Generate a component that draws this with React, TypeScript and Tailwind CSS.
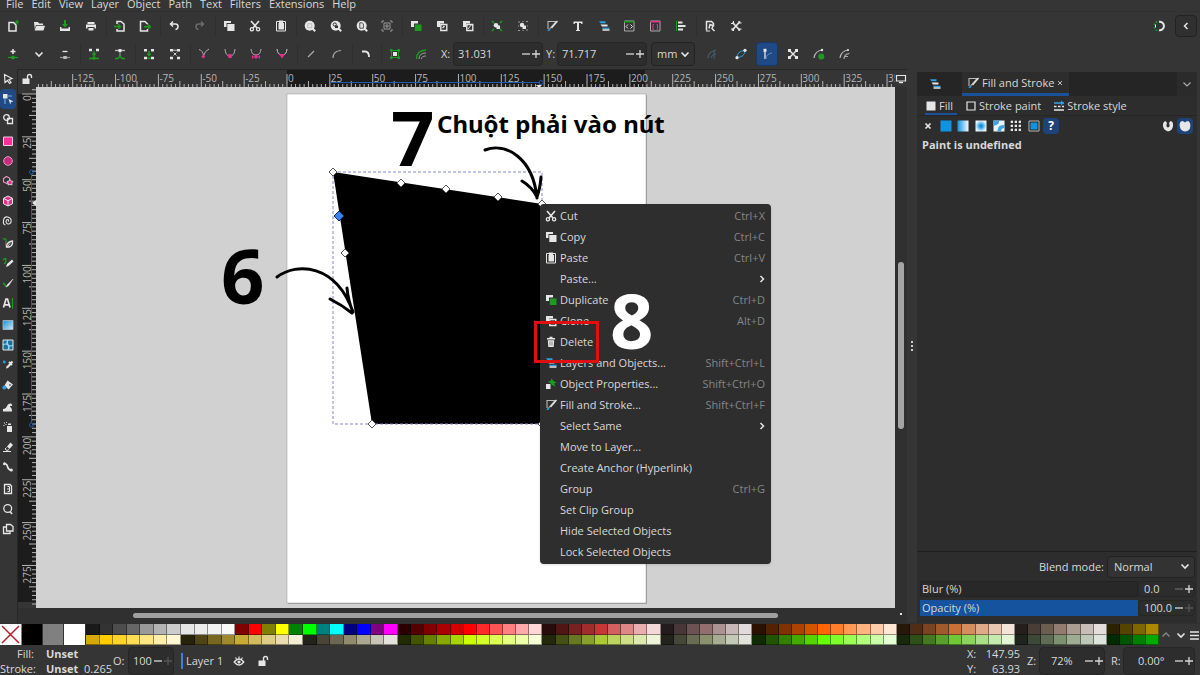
import { useState } from 'react';
import type { ReactNode } from 'react';

const W = '#e6e6e6';
const G = '#1c9c1f';
const P = '#e0318c';
const B = '#2f9fe0';

// every glyph is drawn on a 12 x 12 grid
const icons: Record<string, ReactNode> = {
  new: <><path d="M2 2.500h4.500l2.500 2.500V11H2z" fill="none" stroke={W} strokeWidth="1.500" /><path d="M10 0v4.500M7.800 2.200h4.200" stroke={G} strokeWidth="1.300" /></>,
  open: <path d="M1 2h4l1 1.500h4V5H3L1.800 9zM3.500 5.800H12L10.500 10.500H1.500z" fill={W} />,
  save: <><path d="M1 7v4h10V7H9.500v1.500h-7V7z" fill={W} /><path d="M5 0h2v4h2L6 7.500 3 4h2z" fill={G} /></>,
  print: <><path d="M2.500 2h7v2h-7zM1 4.500h10v4H9.500V7h-7v1.500H1z" fill={W} /><path d="M3.500 8h5v2.500h-5z" fill={W} /></>,
  import: <><path d="M3 4V1.500h4L10 4v7H3V9" fill="none" stroke={W} strokeWidth="1.500" /><path d="M0 6.500h6M4 4l2.500 2.500L4 9" fill="none" stroke={G} strokeWidth="1.500" /></>,
  export: <><path d="M8.500 4.500V4L6 1.500H1.500V11h7V9" fill="none" stroke={W} strokeWidth="1.500" /><path d="M5 6.800h6M9 4.500l2.500 2.300L9 9" fill="none" stroke={G} strokeWidth="1.500" /></>,
  undo: <path d="M5 1.500L2.500 4 5 6.500M2.500 4H7.500q2.500 0 2.500 2.500T7.500 9.500" fill="none" stroke={W} strokeWidth="1.500" />,
  redo: <path d="M7 1.500L9.500 4 7 6.500M9.500 4H4.500Q2 4 2 6.500T4.500 9.500" fill="none" stroke="#6b6b6b" strokeWidth="1.500" />,
  copy: <><path d="M1 1h7v2H3.500v4H1z" fill={W} /><path d="M4.300 4H11.500v7H4.300z" fill={W} /></>,
  cut: <><path d="M2 1l6 7M10 1L4 8" stroke={W} strokeWidth="1.600" /><circle cx="2.900" cy="9.300" r="1.600" fill="none" stroke={W} strokeWidth="1.300" /><circle cx="9.100" cy="9.300" r="1.600" fill="none" stroke={W} strokeWidth="1.300" /></>,
  paste: <><path d="M1.500 1.500h9v9.500h-9z" fill="none" stroke={W} /><path d="M4 .5h4V3h1v6.500H3.500V3H4z" fill={W} /></>,
  zoomSel: <><circle cx="5.700" cy="5.700" r="5" fill={W} /><path d="M8.500 8.500l2.700 2.700" stroke={W} strokeWidth="2" /><path d="M3.700 3.700h4v4h-4z" fill="none" stroke="#aaa" strokeWidth=".6" /></>,
  zoomDraw: <><circle cx="5.700" cy="5.700" r="5" fill={W} /><path d="M8.500 8.500l2.700 2.700" stroke={W} strokeWidth="2" /><circle cx="4.800" cy="4.500" r="1.600" fill="none" stroke="#333" /><path d="M5 5.500h3v2.500H5z" fill="#333" /></>,
  zoomPage: <><circle cx="5.700" cy="5.700" r="5" fill={W} /><path d="M8.500 8.500l2.700 2.700" stroke={W} strokeWidth="2" /><path d="M3.800 2.800h2.400l1.200 1.200v4.200H3.800z" fill="none" stroke="#444" strokeWidth=".9" /></>,
  zoomCenter: <><path d="M1 3V1h2M9 1h2v2M11 9v2H9M3 11H1V9" fill="none" stroke="#999" /><path d="M3 3h6v6H3zM5 5h2v2H5z" fill="none" stroke="#999" /></>,
  duplicate: <><path d="M1 1h7v2.500H4V7H1z" fill={W} /><path d="M4.800 4.500H11.500v6.500H4.800z" fill={G} /></>,
  clone: <><path d="M1 1h7v2.500H4V7H1z" fill={W} /><path d="M4.800 4.500h6v6h-6z" fill="none" stroke={W} strokeWidth="1.400" /><path d="M6.500 8l2-2" stroke={W} strokeWidth="1.400" /></>,
  unlink: <><path d="M1 1h7v2.500H4V7H1z" fill={W} /><path d="M4.800 4.500h6v6h-6z" fill="none" stroke={W} strokeWidth="1.400" /><path d="M6 9l4-5" stroke={W} /></>,
  group: <><path d="M1 1l2 2M11 1L9 3M11 11L9 9M1 11l2-2" fill="none" stroke={G} strokeWidth="1.600" /><circle cx="5" cy="5.300" r="2.300" fill={W} /><path d="M5.500 5.500H9V9H5.500z" fill={W} /></>,
  ungroup: <><path d="M1 2h2M9 1.500h2M11 10H9M3 10.500H1M6 1v1M6 10v1M1 6h1M10 6h1" stroke="#999" strokeWidth="1.200" /><circle cx="5" cy="5" r="2.200" fill={W} /><path d="M5.500 5.500H9V9H5.500z" fill={W} /></>,
  fillStroke: <><path d="M2 9V1.500h8L3.500 9" fill="none" stroke="#bbb" strokeWidth="1.100" /><path d="M11.500 1L5.500 8" stroke={W} strokeWidth="1.300" /><path d="M1.500 11q.3-2.500 2.500-2l.5 1q-1 1.300-3 1z" fill={B} /></>,
  text: <path d="M1.500 1.500h9V4H9.300L9 3H7v6.800l1 .4v.8H4v-.8l1-.4V3H3l-.3 1H1.500z" fill={W} />,
  layers: <><path d="M1 1.200h6.500v2H2.500z" fill={B} /><path d="M2.500 4.500h7v2H4z" fill={W} /><path d="M4 7.800h7.500v1.400H5z" fill={B} /><path d="M4.500 10h7" stroke={W} strokeWidth="1.500" /></>,
  xml: <><path d="M1.500 1h9.500v10H1.500z" fill="none" stroke="#aaa" /><path d="M1 1h10.500v1.500H1z" fill={G} /><path d="M5 4.500L3 6.500l2 2M7.500 4.500l2 2-2 2" fill="none" stroke={W} /></>,
  selectors: <><path d="M1.500 1h9.500v10H1.500z" fill="none" stroke="#aaa" /><path d="M1 1h10.500v1.500H1z" fill={P} /><path d="M5 4.500H4v5h1M7.500 4.500h1v5h-1" fill="none" stroke={P} /></>,
  align: <><path d="M1.500 1v10" stroke={G} /><path d="M3 1.500h4.500v2H3zM3 5h7.500v2H3zM3 8.500h5v2H3z" fill={W} /></>,
  docProps: <><path d="M2.500 10.500V1.500h5l2 2v3" fill="none" stroke={W} strokeWidth="1.500" /><path d="M5 8.500l1-4 3 1-1 3 2.500 2.500" fill="none" stroke={W} strokeWidth="1.500" /><path d="M2 11h4" stroke={W} /></>,
  prefs: <><path d="M2.500 2.500l7.500 8M10 1.500L2 10.500" stroke={W} strokeWidth="1.700" /><path d="M1 3.500h2.500V1M9 1v2h2.500M1 9h2.500v2M9 11V9h2.500" fill="none" stroke={W} strokeWidth="1.100" /></>,
  snap: <><path d="M6 1.800a4.300 4.300 0 110 8.500" fill="none" stroke={W} strokeWidth="2" /><path d="M3.500 1v2M1.500 3.500v1.500M1.500 7v1.500M3.500 9.500V11" stroke={G} strokeWidth="1.500" /><path d="M2.500 4.500v3" stroke={W} /></>,
  nodeAdd: <><path d="M6 1v5M3.500 3.500h5" stroke={W} strokeWidth="1.500" /><path d="M1 9.500h10" stroke={G} strokeWidth="1.200" /><circle cx="6" cy="9.500" r="1.900" fill={G} /></>,
  nodeDel: <><path d="M3.500 3.500h5" stroke={W} strokeWidth="1.300" /><path d="M1 9.500h10" stroke="#999" strokeWidth="1.200" /><path d="M4.300 8h3.500v3H4.300z" fill="#bbb" /></>,
  chevron: <path d="M2.500 4.500L6 8l3.500-3.500" fill="none" stroke={W} strokeWidth="1.600" />,
  nodeJoin: <><path d="M1 2h3M8 2h3" stroke={W} strokeWidth="2.400" /><path d="M6 3v4M4.300 5.500L6 7.500l1.700-2M1 10.500h10" stroke={G} fill="none" strokeWidth="1.300" /><circle cx="6" cy="10" r="1.700" fill={G} /></>,
  nodeBreak: <><path d="M1 2.500h10" stroke="#bbb" strokeWidth="1.300" /><path d="M4.500 1h3v3h-3z" fill={W} /><path d="M6 4v4" stroke="#aaa" /><path d="M1 10.500h3L6 8l2 2.500h3" fill="none" stroke={G} strokeWidth="1.400" /></>,
  segJoin: <><path d="M1 2.200h3M8 2.200h3M1 10h3M8 10h3" stroke={W} strokeWidth="2.600" /><path d="M6 3v5M4.300 5.500L6 7.500l1.700-2M4 10.200h4" stroke={G} fill="none" strokeWidth="1.500" /></>,
  segDel: <><path d="M1 2.200h3M8 2.200h3M1 10h3M8 10h3" stroke={W} strokeWidth="2.600" /><path d="M4 2.200h4M4.500 4.500l3 3M7.500 4.500l-3 3" stroke="#ccc" fill="none" /></>,
  cusp: <><path d="M1 1.500q4 1 4.500 6.500Q6.500 3 11 1" fill="none" stroke="#aaa" /><path d="M5.300 6.500l2 2-2 2-2-2z" fill={P} /></>,
  smooth: <><path d="M1 1q.5 7 5 7t5-7" fill="none" stroke="#aaa" /><circle cx="6" cy="8" r="2.200" fill={P} /></>,
  symmetric: <><path d="M1 1q.5 6 5 6t5-6" fill="none" stroke="#aaa" /><path d="M2 9h8M2.500 7.500v3M9.500 7.500v3M5 7h2v3H5z" fill={P} stroke={P} /></>,
  autoSmooth: <><path d="M1 1q.5 6 5 6t5-6" fill="none" stroke="#ccc" /><path d="M3 6h6L6 10.500z" fill={P} /></>,
  line: <path d="M3 9l6-6" stroke="#aaa" strokeWidth="1.200" />,
  curve: <path d="M2 10q0-7 8-7.500" fill="none" stroke="#aaa" strokeWidth="1.200" />,
  corner: <path d="M2 3.500h3q4 0 4 5.500" fill="none" stroke={W} strokeWidth="1.800" />,
  toPath: <><path d="M2.500 2.500h7v7h-7z" fill="none" stroke={G} /><path d="M1 1h2.500v2.500H1zM8.500 1H11v2.500H8.500zM1 8.500h2.500V11H1zM8.500 8.500H11V11H8.500z" fill={G} /><path d="M4 4h4v4H4z" fill={W} /></>,
  strokePath: <><path d="M1.500 11q0-8.500 9.500-9" fill="none" stroke={G} strokeWidth="1.300" /><path d="M4 11q0-6 7-6M6.500 11q0-3 4.500-3" fill="none" stroke="#999" /></>,
  lpe: <><path d="M2 10q0-6 8-8" fill="none" stroke="#4d6478" /><path d="M5 10q0-3 5-4M8 3v8" fill="none" stroke="#426079" /></>,
  outline: <><path d="M2 9.500Q2 3 10 2.500 10 9 2 9.500z" fill="none" stroke={B} /><circle cx="2" cy="9.700" r="1.600" fill={W} /><circle cx="10" cy="2.300" r="1.600" fill={W} /></>,
  handles: <><path d="M4 2v9" stroke={W} strokeWidth="1.300" /><path d="M2.500 .8h3v3h-3z" fill={W} /><path d="M5 11q0-5 6-6" fill="none" stroke="#5b8cc2" /></>,
  transform: <><path d="M2.500 2.500l7 7M9.500 2.500l-7 7" stroke={W} strokeWidth="1.400" /><path d="M1 1h3v3H1zM8 1h3v3H8zM1 8h3v3H1zM8 8h3v3H8z" fill={W} /></>,
  clipEdit: <><path d="M1 10q1-7 8-8" fill="none" stroke="#bbb" strokeWidth="1.200" /><circle cx="8.300" cy="8.500" r="3" fill={G} /><circle cx="9" cy="2" r="1.200" fill={W} /></>,
  maskEdit: <><path d="M1 10q1-7 8-8" fill="none" stroke="#bbb" strokeWidth="1.200" /><path d="M5 11q0-5 5.500-5.500M5.500 8.500h3.500" fill="none" stroke="#aaa" strokeWidth="1.200" /><circle cx="9" cy="2" r="1" fill={W} /></>,
  selector: <path d="M2.500 1.500l7.500 4-3 1 2 3-1.500 1-2-3-2.500 2z" fill="none" stroke={W} strokeWidth="1.200" />,
  node: <><path d="M1 1h4.500v4.500H1z" fill={W} /><path d="M3 6v5M6 3h4" stroke="#7aa5d8" strokeWidth="1.200" /><path d="M6.500 6l5 2.500L9 9l-.7 2.500z" fill={W} /></>,
  shapeBuilder: <><circle cx="4.500" cy="4.500" r="2.800" fill="none" stroke={W} strokeWidth="1.300" /><path d="M5.500 5.500h5v5h-5z" fill="none" stroke={W} strokeWidth="1.300" /></>,
  rect: <path d="M1.500 2h9v8.500h-9z" fill="#ff2e9a" stroke="#f7c6df" />,
  ellipse: <circle cx="6" cy="6" r="4.300" fill="#c92a80" stroke="#e79cc3" />,
  star: <><path d="M4.500 1.500l3 1.500.5 3-3 2.500-3.500-1.500L1.500 3.500z" fill="none" stroke="#e79cc3" strokeWidth="1.100" /><path d="M8 4.500l1 1.500 2 .5-1.200 1.500.2 2-2-.7-2 .7.200-2L5 6.500 7 6z" fill={P} stroke={W} strokeWidth=".8" /></>,
  box3d: <><path d="M6 1l4.500 2.300v5.500L6 11 1.500 8.800V3.300z" fill={P} stroke={W} /><path d="M1.500 3.300L6 5.800l4.500-2.500M6 5.800V11" stroke={W} fill="none" /></>,
  spiral: <path d="M6 6.500q1-.5.500-1.500T4.500 5q-1 1.500 0 3t3 .8q2-1 1.700-3.500T5.500 2 1.500 5.500 3.500 10" fill="none" stroke={W} strokeWidth="1.100" />,
  pen: <><path d="M1 2q4-1 3 3t1 5" fill="none" stroke={G} strokeWidth="1.300" /><path d="M4.500 10q0-5 6-6 .5 5-3.500 6z" fill="none" stroke={W} strokeWidth="1.300" /><path d="M5 10l3-3.500" stroke={W} /></>,
  pencil: <><path d="M1 3q3-3 3 0t-2 4" fill="none" stroke={G} strokeWidth="1.300" /><path d="M4 10l1-3 5-4.500 1.500 2L6.500 9z" fill={W} /></>,
  calligraphy: <><path d="M1 6q2 1 3 4" fill="none" stroke={G} strokeWidth="1.500" /><path d="M11 2L5.500 7.500 4 10l2.500-1.200z" fill={W} stroke={W} strokeWidth=".5" /></>,
  textTool: <><path d="M1.500 10.500L4 2h1.500l2.500 8.500M2.500 7.800h4.500" fill="none" stroke={W} strokeWidth="1.700" /><path d="M10.500 1v10.500" stroke={G} strokeWidth="1.200" /></>,
  gradient: <><defs><linearGradient id="toolGrad" x1="0" y1="0" x2="1" y2="1"><stop offset="0" stopColor="#1690d8" /><stop offset="1" stopColor="#cfe8f7" /></linearGradient></defs><path d="M1 1.500h10v9H1z" fill="url(#toolGrad)" stroke="#a9bfcc" strokeWidth=".8" /></>,
  mesh: <><path d="M1 1h10v10H1z" fill="#1e6f9e" stroke={W} /><path d="M6 1q-2 2.500 0 5t0 5M1 6q2.500-2 5 0t5 0" fill="none" stroke="#9bdcff" strokeWidth="1.200" /></>,
  dropper: <><path d="M4 9.500l.5-2L8 4l1.500 1.500L6 9z" fill={W} /><path d="M7 3l3 3M8.500 4.500l2-2" stroke={W} strokeWidth="2" /><circle cx="2.300" cy="3" r="1.400" fill={B} /></>,
  bucket: <><path d="M5.500 1.500l5.500 4-4.500 5-4-4z" fill={W} /><path d="M7 6h2" stroke="#333" /><circle cx="2.300" cy="8.500" r="2" fill={B} /></>,
  tweak: <path d="M1 10.500V8q3 0 4-3t4-2.500q2 1 1 2.500-2-.8-2 1 2 .5 2 4.500z" fill={W} />,
  spray: <><path d="M5 5h5v6H5zM6 2.500h3V4H6z" fill={W} /><path d="M2 2h1M4 1.500h.8M1.500 4.500h1M3.500 3.500h1" stroke={W} /></>,
  eraser: <><path d="M5 5.500l3.500-4 2.500 2.500-3.500 4z" fill={W} /><path d="M4.500 6.500L3 8l2 1.500L7 8.500M1 10.500h8" fill="none" stroke={W} /></>,
  connector: <><path d="M2 2.500q3 0 3.500 3T9 9" fill="none" stroke={W} strokeWidth="1.600" /><circle cx="2.500" cy="2.800" r="1.500" fill={W} /><circle cx="9.300" cy="9" r="1.600" fill={W} /></>,
  measure: <><path d="M2.500 1.500h5.500l1.500 1.500v7.500h-7z" fill="none" stroke={W} strokeWidth="1.300" /><path d="M5.500 3.500h2v5h-2M5 6h2" stroke={W} fill="none" /></>,
  zoom: <><circle cx="5.700" cy="5.500" r="3.900" fill="none" stroke={W} strokeWidth="1.300" /><path d="M8 8.500l2 2.500" stroke={W} strokeWidth="1.600" /></>,
  pages: <><path d="M4.500 8V1.500h4L11 3.500V8z" fill="none" stroke={W} strokeWidth="1.300" /><path d="M4.500 4h-3v6.500H8V8" fill="none" stroke={W} strokeWidth="1.300" /></>,
  unlock: <><path d="M1.500 5.500h7V11h-7z" fill={W} /><path d="M6.500 6V3.500q0-2 2-2t2 2V5" fill="none" stroke={W} strokeWidth="1.400" /></>,
  monitor: <><path d="M1.500 2.500h9v5.500h-9z" fill="none" stroke={W} strokeWidth="1.200" /><path d="M4 9.500h4" stroke={W} strokeWidth="1.400" /></>,
  eye: <><path d="M1.200 7q4.800-6 9.600 0-4.800 6-9.600 0z" fill="none" stroke={W} strokeWidth="1.300" /><circle cx="6" cy="7" r="1.600" fill={W} /><path d="M2.500 2.500l1 1.500M6 1.500v2M9.500 2.500l-1 1.500" stroke={W} strokeWidth="1.200" /></>,
  trash: <><path d="M2 2h8v1.500H2zM4.500 .8h3V2h-3zM2.800 4.300h6.400L8.700 11H3.300z" fill={W} /><path d="M4.800 5.500v4M6 5.500v4M7.200 5.500v4" stroke="#777" strokeWidth=".6" /></>,
  objProps: <><path d="M1 6h4.500v5H1z" fill={W} /><path d="M2.500 3.500L5.500 3l1-2.500L8.500 3l3 1.500-2.500 1 1.500 3-3.500-1.500-1.500-2z" fill={G} /></>,
  strokeStyle: <><path d="M1 3h10" stroke={B} strokeWidth="1.600" /><path d="M1 6.500h2.500M5 6.500h2.500M9 6.500h2M1 10h10" stroke={W} strokeWidth="1.400" /><path d="M8 .5l3 2.500-3 2.500z" fill={B} /></>,
  square: <path d="M1.500 1.500h9v9h-9z" fill={W} />,
  squareOutline: <path d="M2 2h8v8H2z" fill="none" stroke={W} strokeWidth="1.200" />,
  none: <path d="M3.500 3.500l5 5M8.500 3.500l-5 5" stroke={W} strokeWidth="1.700" />,
  flat: <path d="M.5.500h11v11H.5z" fill="#1093e0" />,
  linear: <><defs><linearGradient id="lin"><stop offset="0" stopColor="#1093e0" /><stop offset="1" stopColor="#f4faff" /></linearGradient></defs><path d="M.5.500h11v11H.5z" fill="url(#lin)" /></>,
  radial: <><defs><radialGradient id="rad"><stop offset=".2" stopColor="#1093e0" /><stop offset="1" stopColor="#e8f5fd" /></radialGradient></defs><path d="M.5.500h11v11H.5z" fill="url(#rad)" /></>,
  meshFill: <><path d="M.5.500h11v11H.5z" fill="#e8f4fb" /><path d="M.5.500H6q1 4-5.500 5.500zM5 9q0-4 6.500-4v3q-3.500 0-3.500 3.500H4z" fill="#3fa4e4" /></>,
  pattern: <><path d="M2 0v12M6 0v12M10 0v12M0 2h12M0 6h12M0 10h12" stroke="#aaa" strokeDasharray="1 1" /><path d="M1 1h2v2H1zM5 1h2v2H5zM9 1h2v2H9zM1 5h2v2H1zM5 5h2v2H5zM9 5h2v2H9zM1 9h2v2H1zM5 9h2v2H5zM9 9h2v2H9z" fill={W} /></>,
  swatch: <><path d="M1 1h10v10H1z" fill="#222" stroke="#bbb" /><path d="M2.500 2.500h7v7h-7z" fill="#1093e0" /></>,
  evenOdd: <path d="M3.500 1Q.5 2 1 6t5 5.500q4.500-1 5-5.500T8.500 1L7 3Q8.500 7 6 7.500 3.500 7 5 3z" fill={W} />,
  nonZero: <path d="M3 1Q0 2 .8 6.500T6 11.500q5-.5 5.300-5T9 1Q7 1 6 2.500 5 1 3 1z" fill={W} />,
};

function Icon({ name }: { name: string }) {
  return (
    <svg viewBox="0 0 12 12" className="h-3 w-3 shrink-0" aria-hidden="true">
      {icons[name]}
    </svg>
  );
}

const menus = ['File', 'Edit', 'View', 'Layer', 'Object', 'Path', 'Text', 'Filters', 'Extensions', 'Help'];

const commands = [
  ['new', 'open', 'save', 'print'],
  ['import', 'export'],
  ['undo', 'redo'],
  ['copy', 'cut', 'paste'],
  ['zoomSel', 'zoomDraw', 'zoomPage', 'zoomCenter'],
  ['duplicate', 'clone', 'unlink'],
  ['group', 'ungroup'],
  ['fillStroke', 'text', 'layers', 'xml', 'selectors', 'align'],
  ['docProps', 'prefs'],
];

const nodeCommands = [
  ['nodeAdd', 'chevron', 'nodeDel'],
  ['nodeJoin', 'nodeBreak'],
  ['segJoin', 'segDel'],
  ['cusp', 'smooth', 'symmetric', 'autoSmooth'],
  ['line', 'curve'],
  ['corner'],
  ['toPath', 'strokePath'],
];

const tools = [
  ['selector', 'node', 'shapeBuilder'],
  ['rect', 'ellipse', 'star', 'box3d', 'spiral'],
  ['pen', 'pencil', 'calligraphy', 'textTool'],
  ['gradient', 'mesh', 'dropper', 'bucket'],
  ['tweak', 'spray', 'eraser', 'connector'],
  ['measure', 'zoom', 'pages'],
];

const contextMenu = [
  { label: 'Cut', icon: 'cut', keys: 'Ctrl+X' },
  { label: 'Copy', icon: 'copy', keys: 'Ctrl+C' },
  { label: 'Paste', icon: 'paste', keys: 'Ctrl+V' },
  { label: 'Paste...', submenu: true },
  { label: 'Duplicate', icon: 'duplicate', keys: 'Ctrl+D' },
  { label: 'Clone', icon: 'clone', keys: 'Alt+D' },
  { label: 'Delete', icon: 'trash' },
  { label: 'Layers and Objects...', icon: 'layers', keys: 'Shift+Ctrl+L' },
  { label: 'Object Properties...', icon: 'objProps', keys: 'Shift+Ctrl+O' },
  { label: 'Fill and Stroke...', icon: 'fillStroke', keys: 'Shift+Ctrl+F' },
  { label: 'Select Same', submenu: true },
  { label: 'Move to Layer...' },
  { label: 'Create Anchor (Hyperlink)' },
  { label: 'Group', keys: 'Ctrl+G' },
  { label: 'Set Clip Group' },
  { label: 'Hide Selected Objects' },
  { label: 'Lock Selected Objects' },
];

// first 23 columns of the palette, then the remaining 58
const paletteA = [
  '1a1a1a 333333 4d4d4d 666666 999999 b3b3b3 cccccc e6e6e6 ececec f2f2f2 f9f9f9 800000 ff0000 808000 ffff00 008000 00ff00 008080 00ffff 000080 0000ff 800080 ff00ff',
  'd4aa00 ffcc00 ffd42a ffdd55 ffe680 ffeeaa fff6d5 28220b 504416 786721 a0892c c8ab37 d3bc5f decd87 e9ddaf f4eed7 24221c 484537 6c6753 918a6f aca793 c8c4b7 e3e2db',
];
const paletteB = [
  '2b0000 550000 800000 aa0000 d40000 ff0000 ff2a2a ff5555 ff8080 ffaaaa ffd5d5 280b0b 501616 782121 a02c2c c83737 d35f5f de8787 e9afaf f4d7d7 241c1c 483737 6c5353 916f6f ac9393 c8b7b7 e3dbdb 2b1100 552200 803300 aa4400 d45500 ff6600 ff7f2a ff9955 ffb380 ffccaa ffe6d5 28170b 502d16 784421 a05a2c c87137 d38d5f deaa87 e9c6af f4e3d7 241f1c 483e37 6c5d53 917c6f ac9d93 c8beb7 e3dedb 2b2200 554400 806600 aa8800',
  '222b00 445500 668000 88aa00 aad400 ccff00 d4ff2a ddff55 e5ff80 eeffaa f6ffd5 23280b 445016 677821 89a02c abc837 bcd35f cdde87 dde9af eef4d7 22241c 454837 676c53 8a916f a7ac93 c4c8b7 e2e3db 112b00 225500 338000 44aa00 55d400 66ff00 7fff2a 99ff55 b3ff80 ccffaa e5ffd5 17280b 2d5016 447821 5aa02c 71c837 8dd35f aade87 c6e9af e3f4d7 1f241c 3e4837 5d6c53 7c916f 9dac93 bec8b7 dee3db 002b00 005500 008000 00aa00',
];

function Swatches({ rows }: { rows: string[] }) {
  return (
    <div className="flex h-full w-full flex-col">
      {rows.map((row, r) => (
        <div key={r} className="flex flex-1">
          {row.split(' ').map((c, i) => (
            <button
              key={i}
              aria-label={`#${c}`}
              className="flex-1 border-r border-b border-black/40"
              style={{ backgroundColor: `#${c}` }}
            />
          ))}
        </div>
      ))}
    </div>
  );
}

function ToolGroups({ groups }: { groups: string[][] }) {
  return (
    <>
      {groups.map((group, g) => (
        <div key={g} className="contents">
          {g > 0 && <div className="my-1 w-[3px] shrink-0 border-r border-[#2f2f2f]" />}
          {group.map((name) => (
            <button key={name} aria-label={name} className="flex flex-1 items-center justify-center">
              <Icon name={name} />
            </button>
          ))}
        </div>
      ))}
    </>
  );
}

function Spin({ label, value, className, dimMinus, dimPlus }: {
  label: string;
  value: string;
  className: string;
  dimMinus?: boolean;
  dimPlus?: boolean;
}) {
  return (
    <div className={`flex items-center rounded-sm border border-[#262626] bg-[#2d2d2d] ${className}`}>
      <input aria-label={label} defaultValue={value} className="w-0 min-w-0 flex-1 bg-transparent outline-none" />
      <button aria-label={`${label} down`} className={dimMinus ? 'w-[10px] text-[#666]' : 'w-[10px]'}>
        <Sign />
      </button>
      <button aria-label={`${label} up`} className={dimPlus ? 'w-[10px] text-[#555]' : 'w-[10px]'}>
        <Sign plus />
      </button>
    </div>
  );
}

function Sign({ plus }: { plus?: boolean }) {
  return (
    <svg viewBox="0 0 10 10" className="h-[10px] w-[10px]" stroke="currentColor" strokeWidth="1.300">
      <path d={plus ? 'M1 5h8M5 1v8' : 'M1 5h8'} />
    </svg>
  );
}

const STEP = 42.86;

function Ruler({ vertical }: { vertical?: boolean }) {
  // origin of the page along this ruler and the span the page covers
  const origin = vertical ? 7 : 251;
  const pageLength = vertical ? 508 : 358;
  const from = vertical ? 0 : -5;
  const to = vertical ? 12 : 15;
  const ticks: ReactNode[] = [];
  for (let i = from * 10 - 8; i < to * 10; i++) {
    const at = origin + (i * STEP) / 10;
    const major = i % 10 === 0;
    const len = major ? 14 : i % 5 === 0 ? 7 : 4;
    ticks.push(
      vertical ? (
        <path key={i} d={`M${18 - len} ${at}h${len}`} />
      ) : (
        <path key={i} d={`M${at} ${18 - len}v${len}`} />
      ),
    );
  }
  const labels: ReactNode[] = [];
  for (let n = from; n < to; n++) {
    const at = origin + n * STEP;
    labels.push(
      vertical ? (
        <text key={n} transform={`translate(13 ${at + (n === 0 ? 7 : n < 4 ? 12 : 18)}) rotate(-90)`}>{n * 25}</text>
      ) : (
        <text key={n} x={at + 1} y="12">{n * 25}</text>
      ),
    );
  }
  return (
    <svg className={vertical ? 'h-full w-[18px]' : 'h-full w-full'}>
      {vertical ? (
        <rect x="0" y={origin} width="18" height={pageLength} fill="#1c1c1c" />
      ) : (
        <rect x={origin} y="0" width={pageLength} height="18" fill="#1c1c1c" />
      )}
      <g stroke="#b4b4b4" strokeWidth="1">{ticks}</g>
      <g fill="#b4b4b4" fontSize="10">{labels}</g>
      {vertical ? (
        <g fill="none" stroke="#1f5aab">
          <path d="M13.500 87v249" />
          <circle cx="13.500" cy="85" r="2" />
          <circle cx="13.500" cy="338" r="2" />
          <path d="M14 116l4-3v6z" fill={W} stroke="none" />
        </g>
      ) : (
        <g fill="none" stroke="#1f5aab">
          <path d="M294 12.500h210" />
          <circle cx="505" cy="12.500" r="2" />
          <path d="M500 15h6l-3 3z" fill={W} stroke="none" />
        </g>
      )}
    </svg>
  );
}

const nodes = [[333, 172], [401, 183], [446, 189], [498, 197], [542, 204], [345, 253], [372, 424], [542, 424]];

function Drawing() {
  return (
    <svg className="absolute inset-0 h-full w-full">
      <g transform="translate(-36 -87)">
        <rect x="288" y="95" width="359" height="509" fill="#a0a0a0" />
        <rect x="287" y="94" width="359" height="509" fill="#fff" stroke="#999" strokeWidth=".5" />
        <path d="M333 172l209 32v220H372z" fill="#000" />
        <rect x="333" y="172" width="209" height="252" fill="none" stroke="#8787cf" strokeDasharray="3 2" />
        {nodes.map(([x, y]) => (
          <path key={`${x}-${y}`} d={`M${x} ${y - 4}l4 4-4 4-4-4z`} fill="#fff" stroke="#555" />
        ))}
        <path d="M339 211l5 5-5 5-5-5z" fill="#3b82f0" stroke="#0c2c60" />
        <g fill="none" stroke="#000" strokeWidth="3" strokeLinecap="round" strokeLinejoin="round">
          <path d="M277 277C297 262 336 264 353 312M330 299q12 6 22 14M347 288q1 12 6 24" />
          <path d="M485 150C506 142 533 158 537 198M522 181q10 6 15 16M541 177q-1 12-4 20" />
        </g>
      </g>
    </svg>
  );
}

function ContextMenu() {
  return (
    <div role="menu" className="absolute top-[117px] left-[504px] w-[231px] rounded bg-[#2e2e2e] pt-px pb-0.5 shadow">
      {contextMenu.map((item) => (
        <button key={item.label} role="menuitem" className="flex h-[21px] w-full items-center pr-1.5 pl-[5px] text-left">
          <span className="flex w-[15px] shrink-0 items-center">{item.icon && <Icon name={item.icon} />}</span>
          <span className="flex-1">{item.label}</span>
          {item.keys && <span className="text-[#858585]">{item.keys}</span>}
          {item.submenu && (
            <svg viewBox="0 0 6 8" className="h-2 w-1.5" fill="none" stroke={W} strokeWidth="1.500">
              <path d="M1.500 1l3 3-3 3" />
            </svg>
          )}
        </button>
      ))}
    </div>
  );
}

function FillStrokePanel() {
  const [tab, setTab] = useState('Fill');
  const tabs = [
    { name: 'Fill', icon: 'square' },
    { name: 'Stroke paint', icon: 'squareOutline' },
    { name: 'Stroke style', icon: 'strokeStyle' },
  ];
  const paints = ['none', 'flat', 'linear', 'radial', 'meshFill', 'pattern', 'swatch'];

  return (
    <aside className="mt-[3px] mr-[3px] flex w-[280px] shrink-0 flex-col bg-[#2d2d2d]">
      <div className="flex h-6 items-stretch bg-[#252525]">
        <button aria-label="Layers and Objects" className="flex w-9 items-center justify-center">
          <Icon name="layers" />
        </button>
        <button className="ml-[9px] flex items-center gap-[3px] border-b-3 border-[#1b519b] bg-[#2d2d2d] pr-1.5 pl-[5px]">
          <Icon name="fillStroke" />
          <span>Fill and Stroke</span>
          <svg viewBox="0 0 6 6" className="h-1.5 w-1.5" stroke="#bbb"><path d="M1 1l4 4M5 1L1 5" /></svg>
        </button>
        <button aria-label="Panel menu" className="ml-auto flex w-5 items-center justify-center bg-[#2b2b2b]">
          <svg viewBox="0 0 12 12" className="h-3 w-3" fill="none" stroke="#aaa" strokeWidth="1.200"><path d="M2.500 4.500L6 8l3.500-3.500" /></svg>
        </button>
      </div>

      <div className="flex h-5 gap-2 border-b border-[#262626] pl-2">
        {tabs.map((t) => (
          <button
            key={t.name}
            onClick={() => setTab(t.name)}
            className={`flex items-center gap-0.5 border-b-2 pt-0.5 pr-1 ${
              tab === t.name ? 'border-[#1b519b]' : 'border-transparent'
            }`}
          >
            <Icon name={t.icon} />
            {t.name}
          </button>
        ))}
      </div>

      <div className="flex h-5 items-center pr-1 pl-0.5">
        <div className="flex w-[140px] items-center">
          {paints.map((p) => (
            <button key={p} aria-label={p} className="flex flex-1 items-center justify-center">
              <Icon name={p} />
            </button>
          ))}
          <button className="h-4 w-4 rounded-sm bg-[#1d4378] text-[12px] leading-4 font-bold text-white">?</button>
        </div>
        <button aria-label="Even-odd" className="ml-auto flex w-[18px] justify-center"><Icon name="evenOdd" /></button>
        <button aria-label="Non-zero" className="flex h-4 w-4 items-center justify-center rounded-sm bg-[#1d4378]">
          <Icon name="nonZero" />
        </button>
      </div>
      <p className="flex-1 border-b border-[#1f1f1f] px-[5px] py-px font-bold">Paint is undefined</p>

      <div className="flex flex-col gap-[3px] pt-1 pr-0.5 pb-[7px] pl-[3px]">
        <div className="flex h-[22px] items-center justify-end gap-[3px]">
          <label htmlFor="blend">Blend mode:</label>
          <div className="relative h-full w-[88px]">
            <select id="blend" className="h-full w-full appearance-none rounded-sm border border-[#222] bg-[#333] px-1.5">
              <option>Normal</option>
            </select>
            <div className="pointer-events-none absolute top-1 right-1"><Icon name="chevron" /></div>
          </div>
        </div>
        <div className="flex h-4 items-center">
          <span className="flex h-full flex-1 items-center border border-[#232323] bg-[#282828] px-px">Blur (%)</span>
          <Spin label="Blur" value="0.0" className="h-full w-[57px] pl-[5px]" dimMinus />
        </div>
        <div className="flex h-4 items-center">
          <span className="flex h-full flex-1 items-center bg-[#15539e] px-0.5">Opacity (%)</span>
          <Spin label="Opacity" value="100.0" className="h-full w-[57px] pl-[5px]" dimPlus />
        </div>
      </div>
    </aside>
  );
}

function StatusBar() {
  return (
    <footer className="flex h-[30px] shrink-0 items-center pt-0.5">
      <dl className="grid h-[30px] w-[113px] grid-cols-[34px_1fr] gap-x-3 leading-[15px] whitespace-nowrap">
        <dt className="text-right">Fill:</dt>
        <dd className="font-bold">Unset</dd>
        <dt className="text-right">Stroke:</dt>
        <dd><b>Unset</b>&nbsp; 0.265</dd>
      </dl>
      <span className="w-[15px]">O:</span>
      <Spin label="Layer opacity" value="100" className="h-[28px] w-[46px] pl-1" dimPlus />
      <div className="ml-[7px] h-4 w-0.5 bg-[#3f7fd6]" />
      <button className="ml-[3px] w-[47px] text-left">Layer 1</button>
      <button aria-label="Toggle layer visibility" className="w-6"><Icon name="eye" /></button>
      <button aria-label="Toggle layer lock"><Icon name="unlock" /></button>
      <dl className="ml-auto grid h-[30px] w-[53px] grid-cols-[1fr_auto] leading-[15px]">
        <dt>X:</dt>
        <dd className="text-right">147.95</dd>
        <dt>Y:</dt>
        <dd className="text-right">63.93</dd>
      </dl>
      <span className="ml-[7px] w-3">Z:</span>
      <Spin label="Zoom" value="72%" className="h-[28px] w-[66px] pl-[11px]" />
      <span className="ml-1.5 w-3">R:</span>
      <Spin label="Rotation" value="0.00°" className="mr-[5px] h-[28px] w-[72px] pl-3.5" />
    </footer>
  );
}

export default function App() {
  const [tool, setTool] = useState('node');

  return (
    <div className="flex h-screen flex-col overflow-hidden bg-[#353535] font-['Open_Sans','Noto_Sans',sans-serif] text-[11px] leading-4 text-[#d8d8d8]">
      {/* Menu bar */}
      <nav className="flex h-3 shrink-0 items-start gap-2 border-b border-[#303030] pl-1.5">
        {menus.map((m) => (
          <button key={m} className="leading-2">{m}</button>
        ))}
      </nav>

      {/* Commands bar */}
      <div className="flex h-[28px] shrink-0 items-stretch">
        <div className="flex w-[749px]">
          <ToolGroups groups={commands} />
        </div>
        <button aria-label="Snapping" className="ml-auto flex w-7 items-center justify-center"><Icon name="snap" /></button>
        <button
          aria-label="Snap options"
          className="my-[3px] mr-[3px] ml-0.5 flex w-[22px] items-center justify-center rounded-sm border border-[#222] bg-[#303030]"
        >
          <svg viewBox="0 0 6 8" className="h-2 w-1.5" fill="none" stroke={W} strokeWidth="1.500"><path d="M4.500 1l-3 3 3 3" /></svg>
        </button>
      </div>

      {/* Tool controls */}
      <div className="mb-px flex h-[28px] shrink-0 items-center">
        <div className="flex h-full w-[434px]">
          <ToolGroups groups={nodeCommands} />
        </div>
        <span className="ml-[7px] w-3">X:</span>
        <Spin label="X" value="31.031" className="h-6 w-[90px] pr-px pl-1" />
        <span className="ml-[3px] w-[11px]">Y:</span>
        <Spin label="Y" value="71.717" className="h-6 w-[90px] pr-px pl-1" />
        <div className="relative ml-1 h-6 w-[44px]">
          <select aria-label="Unit" className="h-full w-full appearance-none rounded-sm border border-[#222] bg-[#313131] pl-[5px]">
            <option>mm</option>
          </select>
          <div className="pointer-events-none absolute top-1.5 right-1"><Icon name="chevron" /></div>
        </div>
        <button aria-label="lpe" className="ml-1 flex w-[26px] justify-center"><Icon name="lpe" /></button>
        <button aria-label="outline" className="ml-[3px] flex w-[26px] justify-center"><Icon name="outline" /></button>
        <button aria-label="handles" className="mx-0.5 flex h-6 w-[22px] items-center justify-center rounded-sm border border-[#16386a] bg-[#1f4a86]">
          <Icon name="handles" />
        </button>
        {['transform', 'clipEdit', 'maskEdit'].map((name) => (
          <button key={name} aria-label={name} className="flex w-[26px] justify-center"><Icon name={name} /></button>
        ))}
      </div>

      <div className="flex min-h-0 flex-1">
        {/* Toolbox */}
        <div className="flex w-[18px] shrink-0 flex-col gap-0.5 border-r border-[#262626]">
          {tools.map((group, g) => (
            <div key={g} className="flex flex-col">
              {group.map((name) => (
                <button
                  key={name}
                  aria-label={name}
                  onClick={() => setTool(name)}
                  className={`flex h-5 w-4 items-center justify-center rounded-sm ${
                    tool === name ? 'bg-[#1f4a86]' : ''
                  }`}
                >
                  <Icon name={name} />
                </button>
              ))}
            </div>
          ))}
        </div>

        <div className="flex min-w-0 flex-1 flex-col">
          <div className="flex h-[18px] shrink-0 border-t border-[#262626]">
            <button aria-label="Lock guides" className="flex w-[18px] shrink-0 items-center justify-center"><Icon name="unlock" /></button>
            <div className="min-w-0 flex-1"><Ruler /></div>
            <button aria-label="Color management" className="flex w-3 shrink-0 items-center justify-center"><Icon name="monitor" /></button>
          </div>
          <div className="flex min-h-0 flex-1">
            <Ruler vertical />
            <main className="relative min-w-0 flex-1 bg-[#d1d1d1]">
              <div className="absolute inset-0 overflow-hidden"><Drawing /></div>
              <ContextMenu />
              <div className="absolute top-[234px] left-[498px] h-[42px] w-[65px] border-3 border-[#e01010]" />
              <p className="absolute top-[12px] left-[355px] text-[76px] leading-[76px] font-bold text-black">7</p>
              <p className="absolute top-[150px] left-[185px] text-[76px] leading-[76px] font-bold text-black">6</p>
              <p className="absolute top-[195px] left-[574px] text-[76px] leading-[76px] font-bold text-white">8</p>
              <p className="absolute top-[21px] left-[401px] font-['Noto_Sans',sans-serif] text-[24px] leading-8 font-bold whitespace-nowrap text-black">
                Chuột phải vào nút
              </p>
            </main>
            <div className="w-3 shrink-0 bg-[#303030] px-[3px] pt-[175px]">
              <div className="h-[167px] rounded-full bg-[#a5a5a5]" />
            </div>
          </div>
          <div className="flex h-[15px] shrink-0 items-start bg-[#303030] pt-[5px]">
            <div className="ml-[115px] h-[5px] w-[645px] rounded-full bg-[#a0a0a0]" />
            <div className="mr-[5px] ml-auto h-0.5 w-0.5 bg-[#e6e6e6]" />
          </div>
        </div>

        <div className="flex w-[10px] shrink-0 flex-col items-center justify-center gap-0.5">
          <i className="h-0.5 w-0.5 bg-[#ccc]" />
          <i className="h-0.5 w-0.5 bg-[#ccc]" />
          <i className="h-0.5 w-0.5 bg-[#ccc]" />
        </div>
        <FillStrokePanel />
      </div>

      {/* Palette */}
      <div className="flex h-[22px] shrink-0 border-t border-[#303030]">
        <button aria-label="No paint" className="w-[22px] border-r border-black/50 bg-white">
          <svg viewBox="0 0 21 21" className="h-full w-full" stroke="#b3202c" strokeWidth="1.500"><path d="M2 2l17 17M19 2L2 19" /></svg>
        </button>
        <button aria-label="Black" className="w-[21px] border-r border-[#333] bg-black" />
        <button aria-label="Gray" className="w-[21px] border-r border-[#333] bg-[#808080]" />
        <button aria-label="White" className="w-[22px] border-r border-[#333] bg-white" />
        <div className="w-[312px]"><Swatches rows={paletteA} /></div>
        <div className="min-w-0 flex-1"><Swatches rows={paletteB} /></div>
        <div className="flex w-[41px] items-center justify-between pl-px">
          <svg viewBox="0 0 12 12" className="h-3 w-3" fill="none" stroke="#888" strokeWidth="1.300"><path d="M2.500 7.500L6 4l3.500 3.500" /></svg>
          <Icon name="chevron" />
          <svg viewBox="0 0 10 10" className="h-[10px] w-[10px]" stroke={W} strokeWidth="1.500"><path d="M0 2h9M0 5.500h9M0 9h9" /></svg>
        </div>
      </div>

      <StatusBar />
    </div>
  );
}
